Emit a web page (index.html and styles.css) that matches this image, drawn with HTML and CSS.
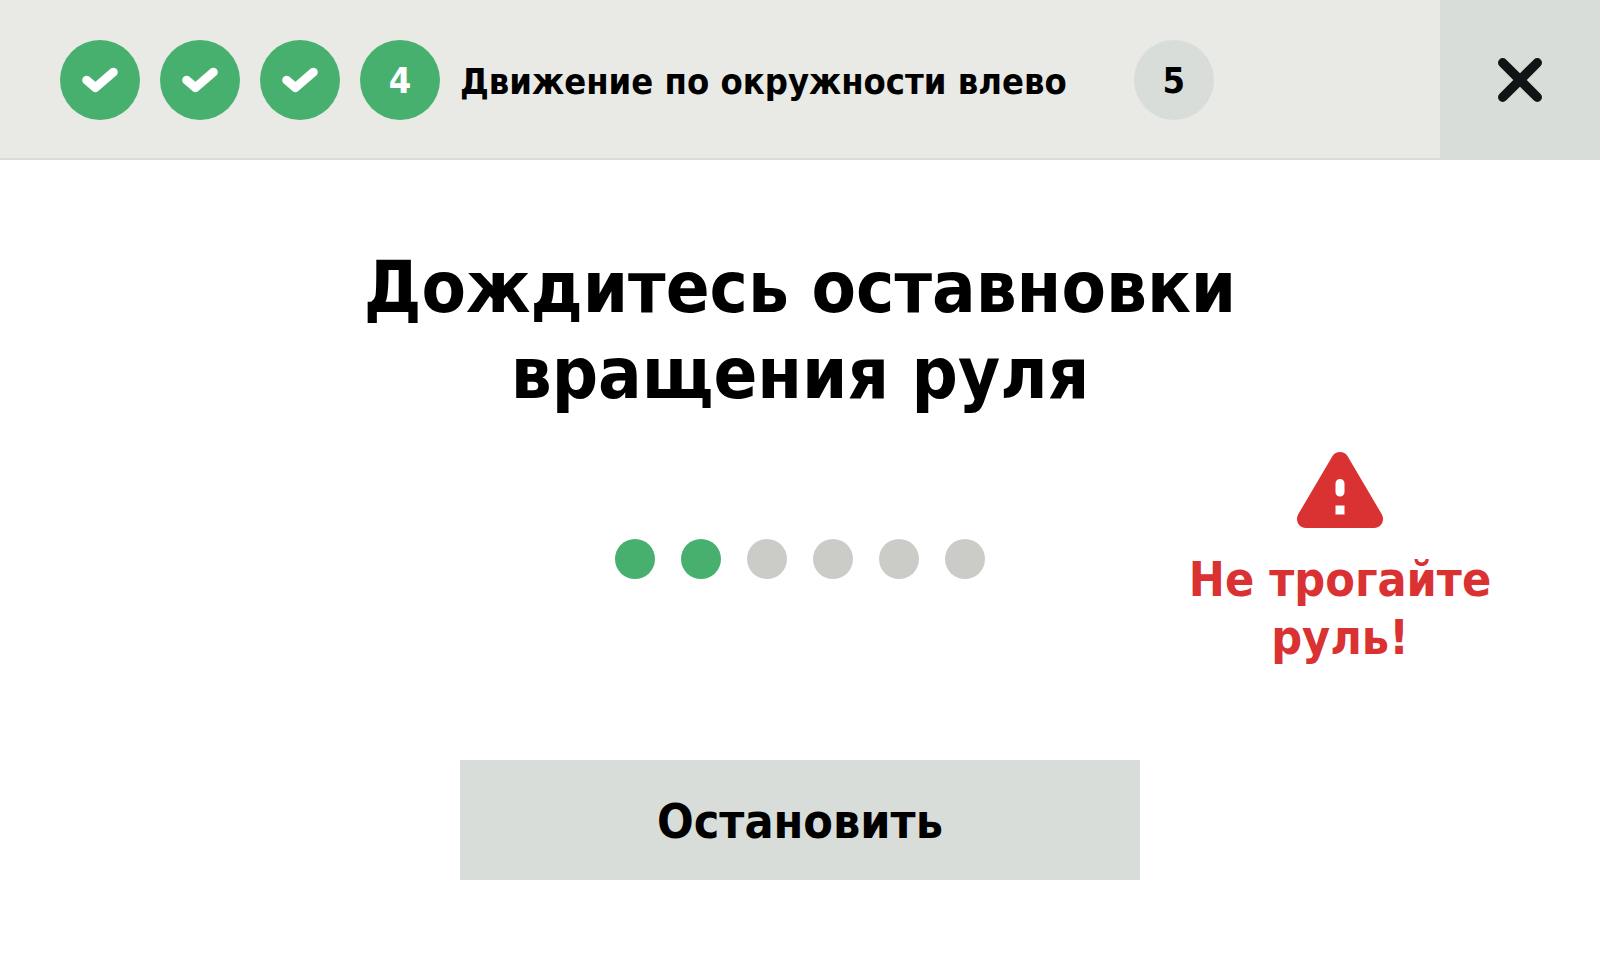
FILE: index.html
```
<!DOCTYPE html>
<html lang="ru">
<head>
  <meta charset="utf-8">
  <meta name="viewport" content="width=device-width, initial-scale=1">
  <title>Движение по окружности влево</title>
  <link rel="stylesheet" href="styles.css">
</head>
<body>
  <header class="header">
    <ol class="steps">
      <li class="step step-done"><svg class="step-check" viewBox="0 0 80 80" role="img" aria-label="Шаг 1"><path d="M26.6 40.2 35.4 47.6 53.4 32.2"/></svg></li>
      <li class="step step-done"><svg class="step-check" viewBox="0 0 80 80" role="img" aria-label="Шаг 2"><path d="M26.6 40.2 35.4 47.6 53.4 32.2"/></svg></li>
      <li class="step step-done"><svg class="step-check" viewBox="0 0 80 80" role="img" aria-label="Шаг 3"><path d="M26.6 40.2 35.4 47.6 53.4 32.2"/></svg></li>
      <li class="step-current" aria-current="step">
        <span class="step step-done">4</span>
        <span class="step-title">Движение по окружности влево</span>
      </li>
      <li class="step">5</li>
    </ol>
    <button class="close" type="button" aria-label="Закрыть">
      <svg class="close-icon" viewBox="0 0 44 44" aria-hidden="true"><path d="M4.7 4.7 39.3 39.3M39.3 4.7 4.7 39.3"/></svg>
    </button>
  </header>
  <main class="main">
    <h1 class="heading">Дождитесь оставновки вращения руля</h1>
    <div class="status">
      <div class="dots" role="progressbar" aria-label="Ожидание" aria-valuemin="0" aria-valuemax="6" aria-valuenow="2">
        <span class="dot dot-on"></span>
        <span class="dot dot-on"></span>
        <span class="dot"></span>
        <span class="dot"></span>
        <span class="dot"></span>
        <span class="dot"></span>
      </div>
      <div class="warning" role="alert">
        <svg class="warning-icon" viewBox="0 0 86 76" aria-hidden="true">
          <path fill-rule="evenodd" d="M35.4 4.2C38.8-1.4 47.2-1.4 50.6 4.2L84.8 62.3C88.2 68.4 84.2 76 77.2 76H8.8C1.8 76-2.2 68.4 1.2 62.3ZM43 27C40.4 27 38.5 29 38.5 31.5V40C38.5 42.6 40.4 44.5 43 44.5S47.5 42.6 47.5 40V31.5C47.5 29 45.6 27 43 27ZM38.5 53.5V62.5H47.5V53.5Z"/>
        </svg>
        <p class="warning-text">Не трогайте руль!</p>
      </div>
    </div>
    <button class="stop" type="button">Остановить</button>
  </main>
</body>
</html>
```
FILE: styles.css
```
* {
  box-sizing: border-box;
}

body {
  margin: 0;
  min-height: 100vh;
  background: #fff;
  color: #000;
  font-family: "DejaVu Sans Condensed", Tahoma, "Noto Sans", sans-serif;
  font-weight: bold;
}

button {
  border: 0;
  color: inherit;
  font: inherit;
  cursor: pointer;
}

.header {
  display: flex;
  justify-content: space-between;
  background: #e9eae5;
}

.steps {
  display: flex;
  flex: 1;
  align-items: center;
  gap: 20px;
  margin: 0;
  padding: 40px 60px 38px;
  border-bottom: 2px solid #d9dbd8;
  list-style: none;
  font-size: 36px;
  line-height: 44px;
}

.step {
  display: flex;
  flex: none;
  align-items: center;
  justify-content: center;
  width: 80px;
  height: 80px;
  padding-top: 2px;
  border-radius: 50%;
  background: #d9ddda;
}

.step-done {
  background: #48b06e;
  color: #fff;
}

.step-check {
  width: 80px;
  height: 80px;
  margin-top: -2px;
  fill: none;
  stroke: #fff;
  stroke-width: 8.8;
  stroke-linecap: round;
  stroke-linejoin: round;
}

.step-current {
  display: flex;
  align-items: center;
  gap: 20px;
  margin-right: 47px;
}

.step-title {
  padding-top: 4px;
}

.close {
  display: flex;
  flex: none;
  align-items: center;
  justify-content: center;
  width: 160px;
  padding: 58px;
  background: #d9ddda;
}

.close-icon {
  width: 44px;
  height: 44px;
  fill: none;
  stroke: #111414;
  stroke-width: 9.4;
  stroke-linecap: round;
}

.main {
  display: flex;
  flex-direction: column;
  align-items: center;
  padding: 84px 100px 80px;
}

.heading {
  max-width: 900px;
  margin: 0 0 36px;
  font-size: 72px;
  line-height: 86px;
  text-align: center;
}

.status {
  display: grid;
  grid-template-columns: 1fr auto 1fr;
  align-items: center;
  width: 100%;
  margin-bottom: 94px;
}

.dots {
  display: flex;
  grid-column: 2;
  gap: 26px;
}

.dot {
  width: 40px;
  height: 40px;
  border-radius: 50%;
  background: #cbccc7;
}

.dot-on {
  background: #48b06e;
}

.warning {
  display: flex;
  flex-direction: column;
  align-items: center;
  gap: 22px;
  justify-self: end;
  width: 320px;
  color: #da3232;
  text-align: center;
}

.warning-icon {
  width: 86px;
  height: 76px;
  fill: currentColor;
}

.warning-text {
  margin: 0;
  font-size: 48px;
  line-height: 58px;
}

.stop {
  width: 100%;
  max-width: 680px;
  padding: 32px 32px 30px;
  background: #d9ddda;
  font-size: 48px;
  line-height: 58px;
}
```
